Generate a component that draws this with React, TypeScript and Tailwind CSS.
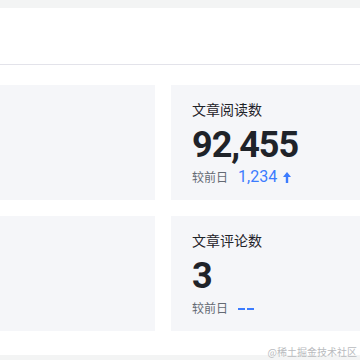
const cjk = "font-['Noto_Sans_CJK_SC',sans-serif]"

interface StatProps {
  title: string
  value: string
  delta?: string
}

function UpArrow() {
  return (
    <svg width="8" height="11" viewBox="0 0 8 11" className="ml-[6px]">
      <path d="M4 0 L8 5 L5.2 5 L5.2 11 L2.8 11 L2.8 5 L0 5 Z" fill="currentColor" />
    </svg>
  )
}

function StatCard({ title, value, delta }: StatProps) {
  return (
    <div className="h-[115px] w-[220px] shrink-0 bg-[#f5f6f9] pl-[21px] pt-[14px]">
      <div className={`${cjk} text-[14px] leading-[20px] text-[#1f2329]`}>{title}</div>
      <div className="mt-[5px] font-['Roboto',sans-serif] text-[36px] font-bold leading-[42px] tracking-[-1px] text-[#1f2329]">{value}</div>
      <div className={`${cjk} mt-[2px] flex items-center text-[12px] leading-[18px] text-[#646a73]`}>
        <span>较前日</span>
        {delta ? (
          <span className="ml-[10px] flex items-center font-['Roboto',sans-serif] text-[16px] text-[#3c7cff]">
            {delta}
            <UpArrow />
          </span>
        ) : (
          <span className="ml-[10px] mt-[2px] flex gap-[2px]" aria-label="--">
            <span className="h-[2px] w-[7px] bg-[#3c7cff]" />
            <span className="h-[2px] w-[7px] bg-[#3c7cff]" />
          </span>
        )}
      </div>
    </div>
  )
}

export default function App() {
  return (
    <div className="relative h-[360px] w-[360px] overflow-hidden bg-white">
      <div className="h-[8px] bg-[#f3f4f4]" />
      <div className="h-[57px] border-b border-[#e3e3ea] bg-white" />
      <div className="flex flex-col gap-[16px] pt-[20px]">
        <div className="flex gap-[16px]">
          <div className="h-[115px] w-[155px] shrink-0 bg-[#f5f6f9]" />
          <StatCard title="文章阅读数" value="92,455" delta="1,234" />
        </div>
        <div className="flex gap-[16px]">
          <div className="h-[115px] w-[155px] shrink-0 bg-[#f5f6f9]" />
          <StatCard title="文章评论数" value="3" />
        </div>
      </div>
      <div className="absolute bottom-0 left-0 h-[5px] w-full bg-[#f3f4f4]" />
      <div className={`${cjk} absolute bottom-[2px] right-[3px] text-[10px] leading-[12px] text-[#b9bbbe]`}>@稀土掘金技术社区</div>
    </div>
  )
}
